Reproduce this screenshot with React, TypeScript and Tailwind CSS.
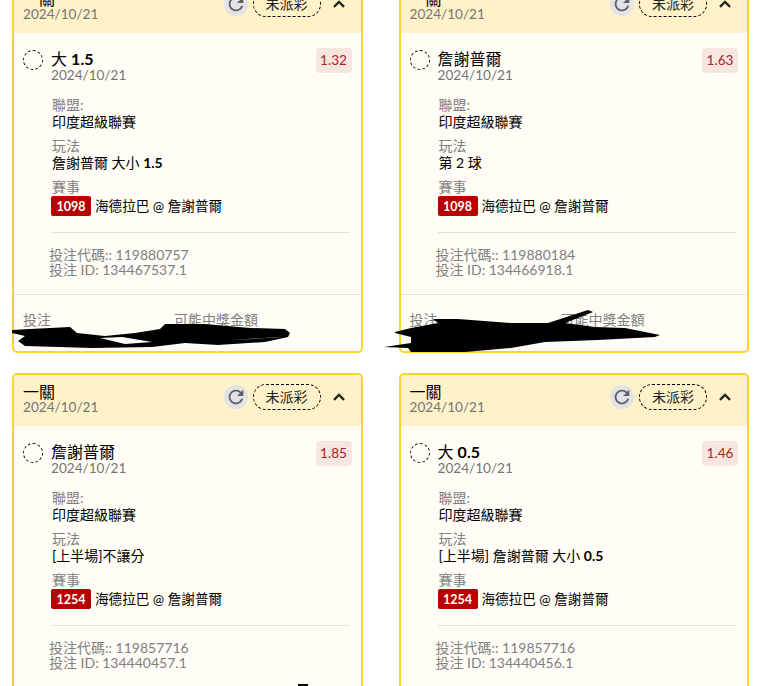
type Bet = {
  title: string;
  odds: string;
  play: string;
  game: string;
  code: string;
  id: string;
};

const bets: Bet[] = [
  { title: '大 1.5', odds: '1.32', play: '詹謝普爾 大小 1.5', game: '1098', code: '119880757', id: '134467537.1' },
  { title: '詹謝普爾', odds: '1.63', play: '第 2 球', game: '1098', code: '119880184', id: '134466918.1' },
  { title: '詹謝普爾', odds: '1.85', play: '[上半場]不讓分', game: '1254', code: '119857716', id: '134440457.1' },
  { title: '大 0.5', odds: '1.46', play: '[上半場] 詹謝普爾 大小 0.5', game: '1254', code: '119857716', id: '134440456.1' },
];

// numbers in the titles sit heavier than the CJK around them
function Heavy({ text }: { text: string }) {
  return (
    <>
      {text.split(/(\d+\.\d+)/).map((part, i) =>
        i % 2 === 1 ? (
          <span key={i} className="font-bold">
            {part}
          </span>
        ) : (
          part
        )
      )}
    </>
  );
}

function RefreshIcon() {
  return (
    <svg viewBox="0 0 24 24" className="h-[22px] w-[22px] fill-[#5f6063]">
      <path d="M17.65 6.35A7.958 7.958 0 0012 4c-4.42 0-7.99 3.58-7.99 8s3.57 8 7.99 8c3.73 0 6.84-2.55 7.73-6h-2.08A5.99 5.99 0 0112 18c-3.31 0-6-2.69-6-6s2.69-6 6-6c1.66 0 3.14.69 4.22 1.78L13 11h7V4l-2.35 2.35z" />
    </svg>
  );
}

function ChevronUp() {
  return (
    <svg viewBox="0 0 24 24" className="h-5 w-5 fill-[#222]">
      <path d="M12 7.5l-7 7 1.9 1.9 5.1-5.1 5.1 5.1 1.9-1.9z" />
    </svg>
  );
}

function BetCard({ bet, scribble }: { bet: Bet; scribble?: 'left' | 'right' }) {
  return (
    <div className="relative h-[373px] rounded-[5px] border-2 border-[#fcd32d] bg-[#fffdf6]">
      {/* Header */}
      <div className="flex h-[51px] items-center rounded-t-[3px] bg-[#fff2c9] pb-[8px] pl-[9px] pr-[12px]">
        <div className="flex-1 pt-[4px]">
          <div className="text-[16px] leading-[17px] text-black">一關</div>
          <div className="text-[13.6px] leading-[15px] text-[#757575]">2024/10/21</div>
        </div>
        <div className="flex h-6 w-6 items-center justify-center rounded-full bg-[#e2e3e6]">
          <RefreshIcon />
        </div>
        <div className="ml-[5px] flex h-[26px] w-[68px] items-center justify-center rounded-full border border-dashed border-black text-[14px] text-[#222]">
          未派彩
        </div>
        <div className="ml-2 flex w-5 justify-center">
          <ChevronUp />
        </div>
      </div>

      {/* Content */}
      <div className="px-[9px] pt-[13px]">
        <div className="flex items-start">
          <div className="mt-[4px] h-5 w-5 rounded-full border border-dashed border-black" />
          <div className="ml-2 flex-1 pt-[4px]">
            <div className="text-[16px] leading-[18px] text-black">
              <Heavy text={bet.title} />
            </div>
            <div className="text-[13.6px] leading-[14px] text-[#757575]">2024/10/21</div>
          </div>
          <div className="mt-[2px] w-[36px] rounded-[4px] bg-[#f7e6e0] py-[3px] text-center text-[13.6px] leading-[19px] text-[#a82528]">
            {bet.odds}
          </div>
        </div>

        <div className="ml-[29px] mt-[14px] text-[14px] leading-[17px]">
          <div className="text-[#808080]">聯盟:</div>
          <div className="text-black">印度超級聯賽</div>
          <div className="mt-[7px] text-[#808080]">玩法</div>
          <div className="text-black">
            <Heavy text={bet.play} />
          </div>
          <div className="mt-[7px] text-[#808080]">賽事</div>
          <div className="ml-[-1px] mt-[1px] flex items-center">
            <span className="flex h-5 w-10 items-center justify-center rounded-[2px] bg-[#b80000] text-[12.5px] font-bold text-white">
              {bet.game}
            </span>
            <span className="ml-1 text-[13.6px] text-black">海德拉巴 @ 詹謝普爾</span>
          </div>
        </div>

        <div className="ml-[28px] mr-[2px] mt-[16px] border-t border-[#e4e2dc]" />

        <div className="ml-[26px] mt-[14px] text-[14px] leading-[15px] text-[#808080]">
          <div>投注代碼:: {bet.code}</div>
          <div>投注 ID: {bet.id}</div>
        </div>
      </div>

      {/* Footer */}
      <div className="mt-[17px] flex border-t border-[#e4e2dc] px-[9px] pt-[16px] text-[14px] leading-[18px] text-[#808080]">
        <div className="w-[151px]">投注</div>
        <div>可能中獎金額</div>
      </div>

      {scribble === 'left' && (
        <svg viewBox="0 0 295 55" className="absolute left-[-9px] top-[323px] h-[55px] w-[295px] fill-black" fillRule="evenodd">
          <path d="M7 25 L25 24 L65 22 L72 28 L100 31 L130 28 L155 24 L160 19 L200 19 L245 23 L280 24 L285 28 L283 32 L260 37 L213 40 L180 38 L147 42 L87 43 L20 41 L13 36 L20 31 L7 28 Z M95 33 L117 32 L147 37 L120 39 Z M223 35 L277 32 L247 34 Z" />
        </svg>
      )}
      {scribble === 'right' && (
        <svg viewBox="0 0 295 60" className="absolute left-[-23px] top-[318px] h-[60px] w-[295px] fill-black">
          <path d="M17 32 L33 28 L60 23 L55 19 L80 19 L133 23 L170 23 L210 10 L215 12 L187 23 L217 27 L247 28 L282 35 L277 37 L220 40 L167 42 L133 48 L87 52 L33 52 L30 48 L6 47 L33 43 L33 37 L17 33 Z" />
        </svg>
      )}
    </div>
  );
}

export default function App() {
  return (
    <div
      className="relative h-[686px] overflow-hidden bg-white"
      style={{ fontFamily: 'Lato, "Noto Sans CJK TC", sans-serif' }}
    >
      <div className="mt-[-20px] grid grid-cols-2 gap-x-[36px] gap-y-[20px] pl-[12px] pr-[13px]">
        {bets.map((bet, i) => (
          <BetCard key={i} bet={bet} scribble={i === 0 ? 'left' : i === 1 ? 'right' : undefined} />
        ))}
      </div>
      <div className="absolute left-[298px] top-[684px] h-[2px] w-[10px] bg-black" />
    </div>
  );
}
